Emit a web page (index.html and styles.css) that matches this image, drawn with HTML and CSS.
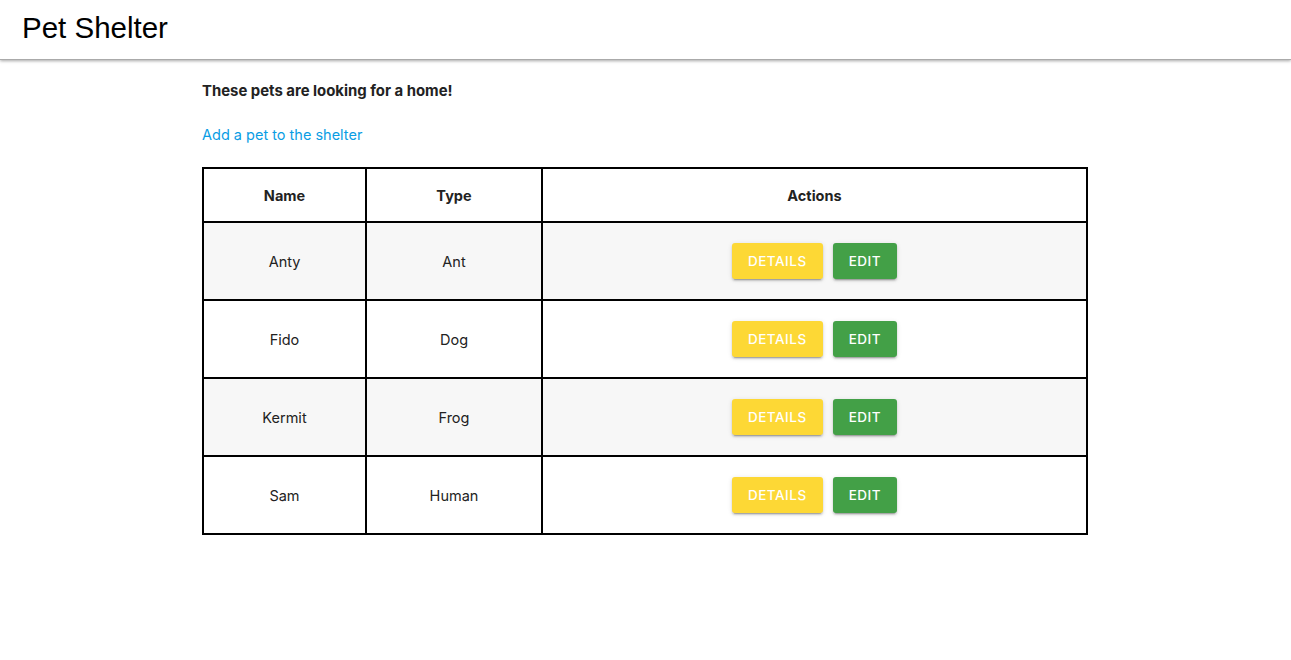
FILE: index.html
```html
<!DOCTYPE html>
<html>
<head>
<meta charset="utf-8">
<link rel="stylesheet" href="styles.css">
</head>
<body>
<header class="topbar">
  <h1 class="brand">Pet Shelter</h1>
</header>
<main class="content">
  <h2 class="lead">These pets are looking for a home!</h2>
  <a class="add-link" href="#">Add a pet to the shelter</a>
  <table class="pets">
    <thead>
      <tr><th class="c-name">Name</th><th class="c-type">Type</th><th>Actions</th></tr>
    </thead>
    <tbody>
      <tr class="odd"><td>Anty</td><td>Ant</td><td><div class="actions"><button class="btn btn-details">Details</button><button class="btn btn-edit">Edit</button></div></td></tr>
      <tr><td>Fido</td><td>Dog</td><td><div class="actions"><button class="btn btn-details">Details</button><button class="btn btn-edit">Edit</button></div></td></tr>
      <tr class="odd"><td>Kermit</td><td>Frog</td><td><div class="actions"><button class="btn btn-details">Details</button><button class="btn btn-edit">Edit</button></div></td></tr>
      <tr><td>Sam</td><td>Human</td><td><div class="actions"><button class="btn btn-details">Details</button><button class="btn btn-edit">Edit</button></div></td></tr>
    </tbody>
  </table>
</main>
</body>
</html>
```
FILE: styles.css
```css
html, body {
  margin: 0;
  padding: 0;
  background: #fff;
}
body {
  font-family: Inter, "Noto Sans", sans-serif;
  color: #222;
}
.topbar {
  height: 59px;
  display: flex;
  align-items: center;
  padding: 0 22px;
  border-bottom: 1px solid #aaa;
  box-shadow: 0 1px 3px rgba(0,0,0,0.35);
}
.brand {
  margin: 0;
  font-family: "Liberation Sans", Arial, sans-serif;
  font-weight: 400;
  font-size: 29.5px;
  color: #000;
  position: relative;
  top: -2px;
}
.content {
  width: 887px;
  margin: 0 auto;
  padding-top: 21px;
}
.lead {
  margin: 0;
  font-size: 14.9px;
  font-weight: 700;
  line-height: 20px;
}
.add-link {
  display: inline-block;
  margin-top: 24px;
  font-size: 14.5px;
  line-height: 20px;
  color: #0a9de4;
  text-decoration: none;
}
.pets {
  margin-top: 22px;
  width: 886px;
  border-collapse: collapse;
  border: 2px solid #000;
  font-size: 14.5px;
}
.pets th, .pets td {
  border: 2px solid #000;
  text-align: center;
  padding: 0;
}
.pets th {
  height: 52px;
  font-weight: 700;
}
.pets td {
  height: 76px;
}
.c-name { width: 161px; }
.c-type { width: 174px; }
.pets tr.odd td {
  background: #f7f7f7;
}
.actions {
  display: flex;
  justify-content: center;
  gap: 10px;
}
.btn {
  font-family: Inter, "Liberation Sans", sans-serif;
  font-weight: 500;
  font-size: 13.5px;
  letter-spacing: 0.5px;
  text-transform: uppercase;
  color: #fff;
  border: none;
  border-radius: 3px;
  height: 36px;
  padding: 0 16px;
  box-shadow: 0 3px 1px -2px rgba(0,0,0,0.2), 0 2px 2px 0 rgba(0,0,0,0.14), 0 1px 5px 0 rgba(0,0,0,0.12);
  cursor: pointer;
}
.btn-details { background: #fdd835; }
.btn-edit { background: #43a047; }
```
